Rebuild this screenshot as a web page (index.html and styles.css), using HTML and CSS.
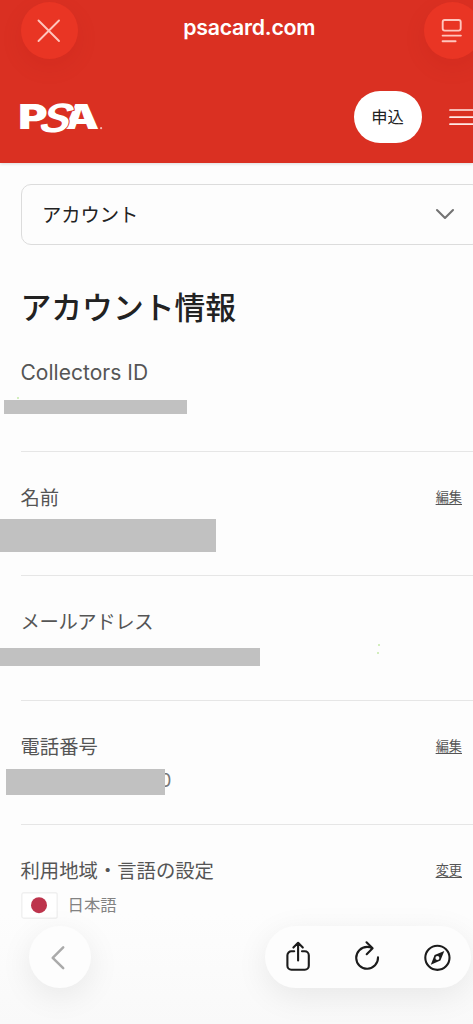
FILE: index.html
```html
<!DOCTYPE html>
<html lang="ja">
<head>
<meta charset="utf-8">
<title>アカウント情報</title>
<link rel="stylesheet" href="styles.css">
</head>
<body>
<div class="screen">
  <header class="header">
    <div class="browser-bar">
      <button class="round-btn" aria-label="close"><svg width="57" height="57" viewBox="0 0 57 57"><path d="M17.5 18.5 38 39M38 18.5 17.5 39"/></svg></button>
      <div class="domain">psacard.com</div>
      <button class="round-btn" aria-label="reader"><svg width="57" height="57" viewBox="0 0 57 57"><rect x="18.7" y="18" width="18" height="10.6" rx="2"/><path d="M18.6 33.6h18.3M18.6 39.2h13"/></svg></button>
    </div>
    <div class="site-bar">
      <svg class="logo" width="84" height="34" viewBox="0 0 84 34">
        <text class="logo-block" transform="translate(-1.7 29) scale(1.32 1)">P</text>
        <text class="logo-block" transform="translate(44 29) scale(1.3 1)">A</text>
        <text class="logo-script" transform="translate(18.5 31.7) skewX(-14) scale(1.08 .98)">S</text>
        <circle cx="81.1" cy="28.2" r="1.1"/>
      </svg>
      <button class="apply">申込</button>
      <svg class="menu" width="24" height="20" viewBox="0 0 24 20"><path d="M1 3h23M1 10.2h23M1 17.2h23"/></svg>
    </div>
  </header>
  <main class="content">
    <div class="select"><span>アカウント</span><svg width="20" height="12" viewBox="0 0 20 12"><path d="M2 2l8 8 8-8"/></svg></div>
    <h1>アカウント情報</h1>
    <section class="row first"><div class="label latin">Collectors ID</div><div class="mask mask-id"></div><i class="speck speck-id"></i></section>
    <section class="row"><div class="label">名前</div><a class="edit">編集</a><div class="mask mask-name"></div></section>
    <section class="row"><div class="label kana">メールアドレス</div><div class="mask mask-mail"></div><i class="speck speck-a"></i><i class="speck speck-b"></i></section>
    <section class="row"><div class="label">電話番号</div><a class="edit">編集</a><div class="digit">0</div><div class="mask mask-phone"></div></section>
    <section class="row last"><div class="label">利用地域・言語の設定</div><a class="edit">変更</a>
      <div class="locale"><svg width="37" height="27" viewBox="0 0 37 27"><rect x=".8" y=".8" width="35.4" height="25.4" rx="2"/><circle cx="18" cy="13.2" r="8"/></svg><span>日本語</span></div>
    </section>
  </main>
  <div class="fade"></div>
  <nav class="toolbar">
    <button class="back" aria-label="back"><svg width="62" height="62" viewBox="0 0 62 62"><path d="M34.2 21.4 23.7 31.8 34.2 42.2"/></svg></button>
    <div class="tools">
      <svg width="32" height="34" viewBox="0 0 32 34"><path d="M12.2 11.3H9.4a4 4 0 0 0-4 4V25.8a4 4 0 0 0 4 4H22.8a4 4 0 0 0 4-4V15.3a4 4 0 0 0-4-4H20M16.1 20.5V3M11.4 7.6 16.1 2.8 20.8 7.6"/></svg>
      <svg width="32" height="34" viewBox="0 0 32 34"><path d="M26 17.4A10.9 10.9 0 1 1 15.1 6.9Q18.4 6.9 20.4 8.3M14.5 2.3 20.6 8.3 14.7 14.2"/></svg>
      <svg width="32" height="34" viewBox="0 0 32 34"><circle cx="15.4" cy="17.8" r="12.1"/><path class="needle" fill-rule="evenodd" d="M22.3 11 18.4 20.6 8.8 24.8 12.6 15.1ZM15.4 15.9a2 2 0 1 0 0 4 2 2 0 0 0 0-4Z"/></svg>
    </div>
  </nav>
</div>
</body>
</html>
```
FILE: styles.css
```css
* { box-sizing: border-box; }
body { margin: 0; background: #fdfdfd; font-family: "Inter", "Noto Sans CJK JP", sans-serif; }
button { border: 0; padding: 0; font: inherit; }
svg { display: block; flex: none; fill: none; stroke-linecap: round; stroke-linejoin: round; }
.screen { position: relative; width: 473px; height: 1024px; overflow: hidden; }
.header { height: 163px; background: #da3022; box-shadow: 0 1px 3px #0002; }
.browser-bar { width: 481px; height: 71px; padding: 1.5px 0 0 20.5px; display: flex; justify-content: space-between; }
.round-btn { width: 57px; height: 57px; border-radius: 50%; background: #e93524; box-shadow: 0 8px 22px #a0000018; }
.round-btn svg { stroke: #ffc5bd; stroke-width: 1.9; }
.domain { padding-top: 12.5px; margin-left: -3px; color: #fff; font-size: 21.3px; line-height: 26px; font-weight: 600; letter-spacing: -.25px; }
.site-bar { display: flex; align-items: center; height: 92px; padding-left: 20px; }
.logo { overflow: visible; }
.logo-block { font: 900 34px "Inter", sans-serif; fill: #fff; }
.logo-script { font: italic 700 42px "Liberation Sans", sans-serif; fill: #fff; stroke: #da3022; stroke-width: 1.8; paint-order: stroke; }
.logo circle { fill: #f4b5ae; }
.apply { width: 70px; height: 52px; margin-left: 249.5px; border-radius: 26px; background: #fff; color: #222; font-size: 16.3px; line-height: 52px; }
.menu { margin-left: 27.5px; stroke: #ffe9e6; stroke-width: 1.7; }
.content { padding-top: 20.5px; }
.select { margin-left: 20.5px; width: 461px; height: 61.5px; border: 1.5px solid #dcdcdc; border-radius: 10px; display: flex; align-items: center; justify-content: space-between; padding: 0 26px 0 20.5px; color: #222; font-size: 19.3px; }
.select span { padding-bottom: 1px; }
.select svg { stroke: #737373; stroke-width: 2.1; }
h1 { margin: 42px 0 0 20.5px; color: #222; font-size: 30.8px; line-height: 41px; font-weight: 500; }
.row { position: relative; height: 124.5px; margin-left: 20.5px; padding-top: 32px; border-bottom: 1.2px solid #e6e6e6; }
.first { height: 123.5px; padding-top: 31px; }
.last { border: 0; }
.label { color: #555; font-size: 19.35px; line-height: 28px; }
.latin { font-size: 21px; letter-spacing: .02px; }
.kana { letter-spacing: -.4px; }
.edit { position: absolute; top: 34px; right: 11px; color: #555; font-size: 13.2px; line-height: 22px; text-decoration: underline; text-underline-offset: 2px; }
.mask { position: absolute; background: #c1c1c1; }
.mask-id { left: -17px; top: 72px; width: 183.5px; height: 14px; }
.mask-name { left: -20.5px; top: 67px; width: 216px; height: 33px; }
.mask-mail { left: -20.5px; top: 71.5px; width: 259.5px; height: 18px; }
.mask-phone { left: -14.5px; top: 68px; width: 158.5px; height: 26px; }
.digit { position: absolute; left: 139px; top: 68px; color: #777; font-size: 19px; line-height: 24px; }
.speck { position: absolute; width: 2px; height: 2px; border-radius: 50%; background: #c5e8a8; }
.speck-id { left: -4px; top: 69px; }
.speck-a { left: 357.5px; top: 67.5px; }
.speck-b { left: 356px; top: 75.5px; }
.locale { display: flex; align-items: center; gap: 10px; margin-top: 6.5px; color: #828282; font-size: 16.4px; line-height: 27px; }
.locale rect { fill: #fff; stroke: #f0f0f0; stroke-width: 1.4; }
.locale circle { fill: #bd344c; }
.fade { position: absolute; left: 0; right: 0; bottom: 0; height: 110px; background: linear-gradient(#f7f7f700, #f7f7f7aa); }
.toolbar { position: absolute; left: 29px; top: 926px; width: 442px; display: flex; justify-content: space-between; }
.back { width: 62px; height: 62px; border-radius: 50%; background: #fdfdfd; box-shadow: 0 8px 32px #00000014; }
.back svg { stroke: #aaa; stroke-width: 2.5; }
.tools { width: 206px; height: 62px; border-radius: 31px; background: #fdfdfd; box-shadow: 0 8px 32px #00000014; display: flex; align-items: center; justify-content: space-between; padding: 0 17px; }
.tools svg { stroke: #1b1b1b; stroke-width: 2.1; }
.tools .needle { fill: #1b1b1b; stroke: none; }
```
